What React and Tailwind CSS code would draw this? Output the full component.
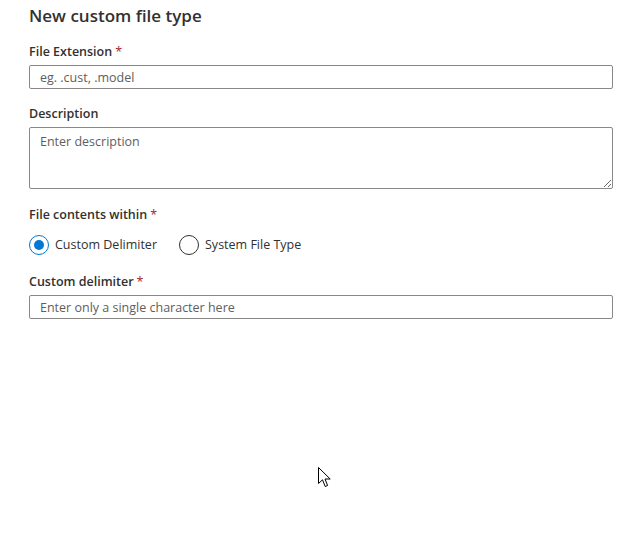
import React from "react";

function Label({ children, required }) {
  return (
    <div className="text-[12.5px] leading-[18px] font-semibold text-[#323130]">
      {children}
      {required && <span className="text-[#a4262c] font-normal ml-[3px]">*</span>}
    </div>
  );
}

function Radio({ checked, label }) {
  return (
    <div className="flex items-center gap-[6px]">
      <div className={`w-[20px] h-[20px] rounded-full border flex items-center justify-center ${checked ? "border-[#0078d4]" : "border-[#323130]"}`}>
        {checked && <div className="w-[10px] h-[10px] rounded-full bg-[#0078d4]" />}
      </div>
      <span className="text-[12.5px] text-[#323130]">{label}</span>
    </div>
  );
}

export default function App() {
  return (
    <div className="relative w-[641px] h-[541px] bg-white" style={{ fontFamily: '"Open Sans", "Noto Sans", sans-serif' }}>
      <div className="pl-[29px] w-[613px] pt-[3px]">
        <h1 className="text-[17px] leading-[26px] font-semibold text-[#323130]">New custom file type</h1>

        <div className="mt-[14px]">
          <Label required>File Extension</Label>
          <input
            className="block mt-[4px] w-full h-[24px] border border-[#8a8886] rounded-[2px] px-[10px] text-[12.5px] placeholder-[#605e5c] outline-none"
            placeholder="eg. .cust, .model"
          />
        </div>

        <div className="mt-[16px]">
          <Label>Description</Label>
          <textarea
            className="block mt-[4px] w-full h-[62px] border border-[#8a8886] rounded-[2px] px-[10px] py-[5px] text-[12.5px] placeholder-[#605e5c] outline-none resize-y"
            placeholder="Enter description"
          />
        </div>

        <div className="mt-[17px]">
          <Label required>File contents within</Label>
          <div className="flex gap-[22px] mt-[11px]">
            <Radio checked label="Custom Delimiter" />
            <Radio label="System File Type" />
          </div>
        </div>

        <div className="mt-[18px]">
          <Label required>Custom delimiter</Label>
          <input
            className="block mt-[4px] w-full h-[24px] border border-[#8a8886] rounded-[2px] px-[10px] text-[12.5px] placeholder-[#605e5c] outline-none"
            placeholder="Enter only a single character here"
          />
        </div>
      </div>

      <svg className="absolute left-[318px] top-[467px]" width="13" height="21" viewBox="0 0 13 21">
        <path d="M0.5 0.5 L0.5 16.5 L4.5 12.8 L7.2 19.5 L9.6 18.5 L7 12 L12.2 12 Z" fill="#fff" stroke="#000" strokeWidth="1" strokeLinejoin="round" />
      </svg>
    </div>
  );
}
